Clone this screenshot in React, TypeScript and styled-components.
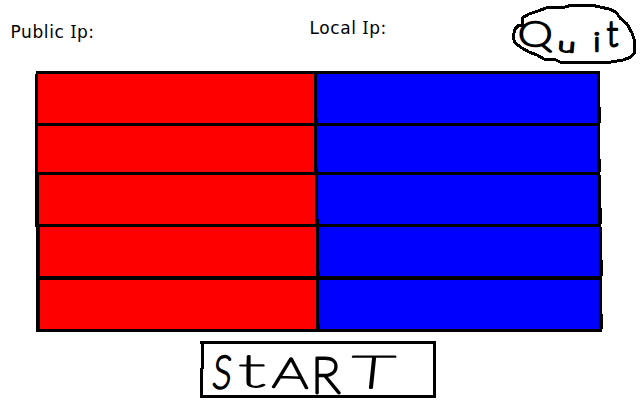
import React from "react";
import styled, { createGlobalStyle } from "styled-components";

const GlobalStyle = createGlobalStyle`
  * { box-sizing: border-box; }
  body { margin: 0; background: #fff; overflow: hidden; }
`;

const Screen = styled.main`
  width: 640px;
  height: 400px;
  background: #fff;
  color: #000;
  display: flex;
  flex-direction: column;
`;

const Header = styled.header`
  height: 71px;
  flex: none;
  display: grid;
  grid-template-columns: 299px 201px 140px;
`;

const Address = styled.span<{ $top: number }>`
  padding: ${(p) => p.$top}px 0 0 10.5px;
  font: 17px/24px "DejaVu Sans", sans-serif;
  letter-spacing: 0.6px;
  white-space: pre;
`;

const SerifCap = styled.span`
  font: 17.5px/20px "Noto Sans", sans-serif;
`;

const PlainButton = styled.button`
  border: 0;
  padding: 0;
  background: none;
  display: block;
  color: #000;
`;

const Sketch = styled.svg`
  display: block;
  overflow: visible;
`;

const Letter = styled.text<{ $weight?: number }>`
  font: 100 40px Lato, sans-serif;
  fill: #000;
  stroke: #000;
  stroke-width: ${(p) => p.$weight ?? 1}px;
  stroke-linejoin: round;
  vector-effect: non-scaling-stroke;
`;

const Board = styled.section`
  flex: none;
  border-top: 3px solid #000;
  width: 564px;
  margin-left: 36px;
  display: flex;
  flex-direction: column;
  height: 261px;
`;

const Row = styled.div<{ $height: number; $shift: number }>`
  height: ${(p) => p.$height}px;
  flex: none;
  display: flex;
  width: 565px;
  margin-left: ${(p) => p.$shift - 1}px;
`;

const Slot = styled.div<{ $color: string; $width: number; $rule: number; $left?: number; $jog: number }>`
  position: relative;
  width: ${(p) => p.$width}px;
  flex: none;
  background: ${(p) => p.$color};
  border: 0 solid #000;
  border-left-width: ${(p) => p.$left ?? 0}px;
  border-right-width: 3px;
  border-bottom-width: ${(p) => p.$rule}px;

  &::after {
    content: "";
    position: absolute;
    z-index: 1;
    right: -4px;
    bottom: 0;
    width: 1px;
    height: ${(p) => p.$jog}px;
    background: #000;
  }
`;

const Footer = styled.footer`
  padding: 9px 0 0 200px;
`;

const rows = [
  { height: 52, rule: 3, shift: 0, left: 3, red: 282, jog: 16 },
  { height: 49, rule: 3, shift: 0, left: 3, red: 282, jog: 13 },
  { height: 52, rule: 3, shift: 0, left: 4, red: 283, jog: 16 },
  { height: 53, rule: 4, shift: 1, left: 4, red: 283, jog: 16 },
  { height: 52, rule: 3, shift: 1, left: 4, red: 283, jog: 15 },
];

export default function App() {
  return (
    <Screen>
      <GlobalStyle />
      <Header>
        <Address $top={20}>Public <SerifCap>I</SerifCap>p:</Address>
        <Address $top={16}>Local <SerifCap>I</SerifCap>p:</Address>
        <PlainButton aria-label="Quit">
          <Sketch width="140" height="71" viewBox="0 0 140 71">
            <path
              d="M22 23 V18 L29 14 L38 11 L46 8 L65 7 L72 5 H91 L100 7 L109 9 L116 12 L120 18 L127 24 L132 33 L134 39 L135 52 L131 57 L123 60 L111 62 H60 L54 59 H44 L37 55 L29 52 L22 48 L15 43 L13 37 L15 29 L19 25 H24"
              fill="none" stroke="#000" strokeWidth="3" strokeLinejoin="round" strokeLinecap="square"
              shapeRendering="crispEdges"
            />
            <Letter $weight={2.8} transform="translate(18 45.5) scale(1.1 .87)">Q</Letter>
            <Letter $weight={2.8} transform="translate(57.5 51) rotate(5) scale(.8 .5)">u</Letter>
            <Letter $weight={2.8} transform="translate(93.5 50.5) scale(.8 .65)">i</Letter>
            <Letter $weight={2.8} transform="translate(107 46) scale(.82 .86)">t</Letter>
          </Sketch>
        </PlainButton>
      </Header>
      <Board>
        {rows.map((r, i) => (
          <Row key={i} $height={r.height} $shift={r.shift}>
            <Slot $color="#f00" $width={r.red} $rule={r.rule} $left={r.left} $jog={5} />
            <Slot $color="#00f" $width={283} $rule={r.rule} $jog={r.jog} />
          </Row>
        ))}
      </Board>
      <Footer>
        <PlainButton aria-label="START">
          <Sketch width="237" height="58" viewBox="0 0 237 58">
            <path
              d="M0 1.5 H235 M234.5 0 V57 M2.5 2 V28 M1.5 27 V57 M0 55.5 H235"
              fill="none" stroke="#000" strokeWidth="3" shapeRendering="crispEdges"
            />
            <Letter $weight={2.6} transform="translate(11.5 46.5) skewX(-6) scale(.88 1.12)">S</Letter>
            <Letter $weight={2.6} transform="translate(38 46) scale(2.1 1.15)">t</Letter>
            <Letter $weight={2.6} transform="translate(72 46) rotate(2) scale(1.42 1.05)">A</Letter>
            <Letter $weight={2.8} transform="translate(111 52) scale(1.25 1.24)">R</Letter>
            <Letter $weight={2.6} transform="translate(149 46.5) skewX(-6) scale(1.92 1.13)">T</Letter>
          </Sketch>
        </PlainButton>
      </Footer>
    </Screen>
  );
}
